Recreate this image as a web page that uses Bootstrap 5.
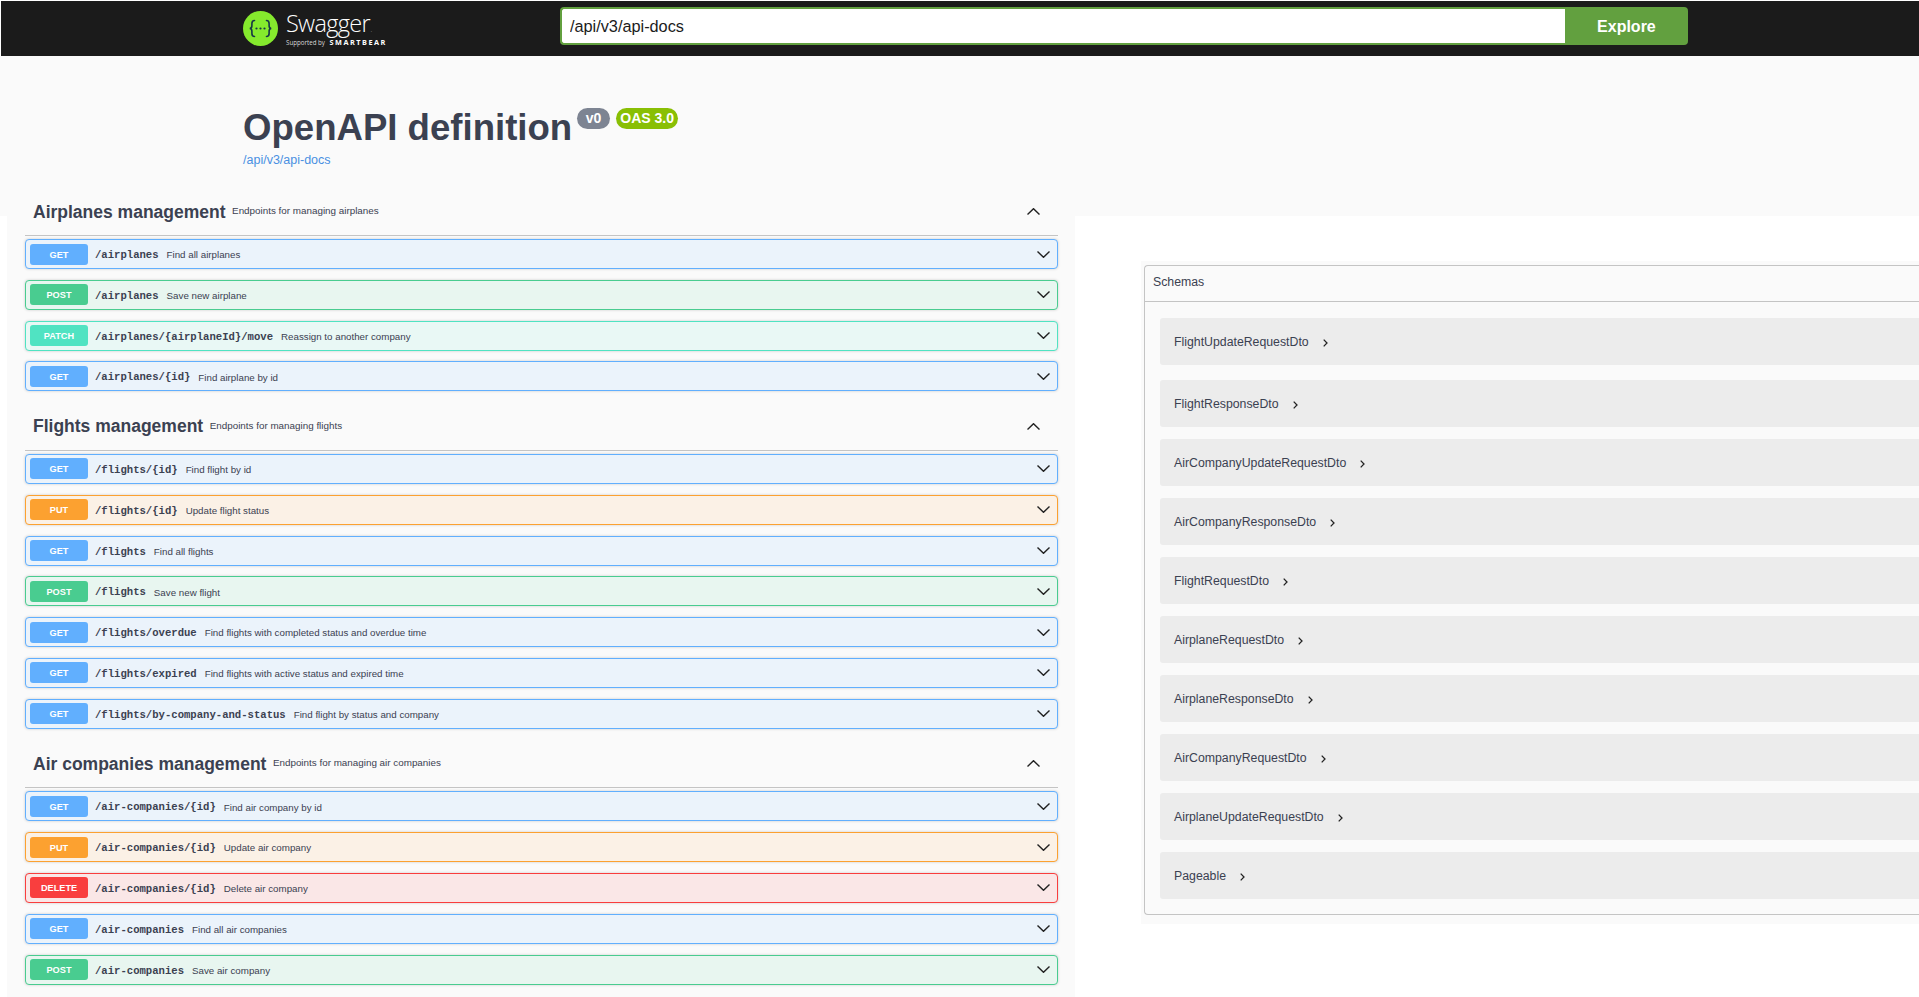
<!DOCTYPE html>
<html lang="en">
<head>
<meta charset="utf-8">
<title>Swagger UI</title>
<link href="https://cdn.jsdelivr.net/npm/bootstrap@5.3.0/dist/css/bootstrap.min.css" rel="stylesheet">
<style>
html,body{height:100%;overflow:hidden;background:#fff;font-family:"Liberation Sans",Arial,sans-serif;color:#3b4151}
.topbar{height:55px;margin:1px 0 0 1px;padding-left:242px;background:#1b1b1b}
.logo-mark{width:35px;height:35px;flex:none}
.logo-text{margin-left:8px;color:#fff;line-height:1;white-space:nowrap}
.logo-name{font-family:"Open Sans",sans-serif;font-weight:300;font-size:23.5px;letter-spacing:-.7px;line-height:26px}
.logo-tm{font-size:5px;letter-spacing:0;margin-left:1px}
.logo-sub{margin-top:-4.5px;font-family:"Open Sans",sans-serif;font-size:6.2px;line-height:9px;color:#d9d9d9}
.logo-sub b{font-size:7.3px;letter-spacing:1.5px;margin-left:3px;color:#fff}
.url-group{width:1128px;margin:6px 0 0 173px;height:38px;align-self:flex-start}
.url-input.form-control{height:38px;border:2px solid #62a03f;border-right:0;border-radius:4px 0 0 4px;padding:0 8px;font-size:16.3px;color:#1b1b1b;background:#fff;box-shadow:none}
.url-btn.btn{width:123px;height:38px;flex:none;background:#62a03f;border:0;border-radius:0 4px 4px 0;color:#fff;font-weight:700;font-size:16px;padding:1px 0 0}
.info-band{height:130px;background:#fafafa;padding:50px 0 0 243px}
.api-title{font-size:36.6px;font-weight:700;line-height:44px;color:#3b4151;margin:0}
.ver-tag.badge{height:21px;margin-top:2px;font-size:14px;font-weight:700;line-height:21px}
.ver-v.badge{margin-left:5px;padding:0 8.5px;background:#7d8492}
.ver-oas.badge{margin-left:6px;padding:0 4.5px;background:#89bf04}
.api-link{display:block;margin-top:3px;font-size:12.5px;line-height:15px;color:#4990e2;text-decoration:none}
.main-area{min-height:811px;background:linear-gradient(#fafafa 30px,#fff 30px)}
.ops-col{flex:none;width:1068px;margin-left:7px;padding:3px 17px 0 18px;background:#fafafa}
.tag-group + .tag-group{padding-top:1.8px}
.tag-head{height:47px;margin-bottom:3px;padding:0 18px 1px 8px;border-bottom:1px solid #c4c4c4}
.tag-name{font-size:17.5px;font-weight:700;line-height:22px;margin:0;color:#3b4151;white-space:nowrap}
.tag-desc{margin-left:6.500px;font-size:9.85px;color:#3b4151;white-space:nowrap}
.op-row{height:30px;margin-bottom:10.8px;padding:0 7px 0 4px;border:1px solid;border-radius:4px;box-shadow:0 0 3px rgba(0,0,0,.19)}
.op-get{background:#ebf3fb;border-color:#61affe}
.op-post{background:#e8f6f0;border-color:#49cc90}
.op-patch{background:#e9f8f5;border-color:#50e3c2}
.op-put{background:#fbf1e6;border-color:#fca130}
.op-del{background:#fae7e7;border-color:#f93e3e}
.verb{width:58px;height:21px;flex:none;border-radius:3px;color:#fff;font-size:9.2px;font-weight:700;line-height:22px;text-align:center}
.op-get .verb{background:#61affe}
.op-post .verb{background:#49cc90}
.op-patch .verb{background:#50e3c2}
.op-put .verb{background:#fca130}
.op-del .verb{background:#f93e3e}
.op-path{margin-left:7px;font-family:"Liberation Mono",monospace;font-size:10.6px;font-weight:700;color:#3b4151;white-space:nowrap;padding-top:4px}
.op-desc{margin-left:8px;font-size:9.75px;color:#3b4151;white-space:nowrap;padding-top:3px}
.chev{width:13px;height:7px;flex:none;fill:none;stroke:#222;stroke-width:1.4}
.schemas-col{flex:none;padding:75px 0 0 66px}
.schemas-wrap{width:800px;padding:4px 0 9px 3px;background:#fafafa}
.schemas-box{border:1px solid #c4c4c4;border-right:0;border-radius:4px 0 0 4px;padding-bottom:15px}
.schemas-title{height:36px;padding:0 0 2px 8px;border-bottom:1px solid #c4c4c4;font-size:12.3px;color:#3b4151;margin:0 0 16px}
.model-row{height:47px;margin:0 0 12px 15px;padding:2px 0 0 14px;border-radius:3px 0 0 3px;background:#ececec;font-size:12.3px;color:#3b4151}
.schemas-title + .model-row{margin-bottom:15px}
.model-row:last-child{margin-bottom:0}
.chev-r{width:5px;height:8px;margin-left:14px;flex:none;fill:none;stroke:#222;stroke-width:1.3}
</style>
</head>
<body>
<header class="topbar d-flex align-items-center">
  <svg class="logo-mark" viewBox="0 0 35 35" aria-hidden="true">
    <circle cx="17.5" cy="17.5" r="17.5" fill="#85ea2d"/>
    <g fill="none" stroke="#173647" stroke-width="1.6" stroke-linecap="round">
      <path d="M11.5 9.5c-2.2 0-2.6 1.2-2.6 3v2.3c0 1.5-.7 2.5-2.1 2.7 1.4.2 2.100 1.200 2.100 2.700v2.300c0 1.800.4 3 2.600 3"/>
      <path d="M23.500 9.500c2.200 0 2.600 1.200 2.600 3v2.300c0 1.500.7 2.500 2.100 2.700-1.400.2-2.100 1.200-2.100 2.700v2.300c0 1.800-.4 3-2.600 3"/>
    </g>
    <g fill="#173647"><circle cx="13.500" cy="17.500" r="1.100"/><circle cx="17.500" cy="17.500" r="1.100"/><circle cx="21.500" cy="17.500" r="1.100"/></g>
  </svg>
  <div class="logo-text">
    <div class="logo-name">Swagger<span class="logo-tm">.</span></div>
    <div class="logo-sub">Supported by <b>SMARTBEAR</b></div>
  </div>
  <form class="url-group input-group flex-nowrap">
    <input class="url-input form-control" type="text" value="/api/v3/api-docs" aria-label="Spec URL">
    <button class="url-btn btn" type="button">Explore</button>
  </form>
</header>

<section class="info-band">
  <div class="d-flex align-items-start">
    <h1 class="api-title">OpenAPI definition</h1>
    <span class="ver-tag ver-v badge rounded-pill">v0</span>
    <span class="ver-tag ver-oas badge rounded-pill">OAS 3.0</span>
  </div>
  <a class="api-link" href="#">/api/v3/api-docs</a>
</section>

<main class="main-area d-flex">
  <div class="ops-col">

    <div class="tag-group">
      <div class="tag-head d-flex align-items-center">
        <h3 class="tag-name">Airplanes management</h3><span class="tag-desc">Endpoints for managing airplanes</span>
        <svg class="chev ms-auto" viewBox="0 0 13 7"><path d="M.5 6.500 6.500.7l6 5.800"/></svg>
      </div>
      <div class="op-row op-get d-flex align-items-center"><span class="verb">GET</span><span class="op-path">/airplanes</span><span class="op-desc">Find all airplanes</span><svg class="chev ms-auto" viewBox="0 0 13 7"><path d="M.5.500l6 5.800 6-5.800"/></svg></div>
      <div class="op-row op-post d-flex align-items-center"><span class="verb">POST</span><span class="op-path">/airplanes</span><span class="op-desc">Save new airplane</span><svg class="chev ms-auto" viewBox="0 0 13 7"><path d="M.5.500l6 5.800 6-5.800"/></svg></div>
      <div class="op-row op-patch d-flex align-items-center"><span class="verb">PATCH</span><span class="op-path">/airplanes/{airplaneId}/move</span><span class="op-desc">Reassign to another company</span><svg class="chev ms-auto" viewBox="0 0 13 7"><path d="M.5.500l6 5.800 6-5.800"/></svg></div>
      <div class="op-row op-get d-flex align-items-center"><span class="verb">GET</span><span class="op-path">/airplanes/{id}</span><span class="op-desc">Find airplane by id</span><svg class="chev ms-auto" viewBox="0 0 13 7"><path d="M.5.500l6 5.800 6-5.800"/></svg></div>
    </div>

    <div class="tag-group">
      <div class="tag-head d-flex align-items-center">
        <h3 class="tag-name">Flights management</h3><span class="tag-desc">Endpoints for managing flights</span>
        <svg class="chev ms-auto" viewBox="0 0 13 7"><path d="M.5 6.500 6.500.7l6 5.800"/></svg>
      </div>
      <div class="op-row op-get d-flex align-items-center"><span class="verb">GET</span><span class="op-path">/flights/{id}</span><span class="op-desc">Find flight by id</span><svg class="chev ms-auto" viewBox="0 0 13 7"><path d="M.5.500l6 5.800 6-5.800"/></svg></div>
      <div class="op-row op-put d-flex align-items-center"><span class="verb">PUT</span><span class="op-path">/flights/{id}</span><span class="op-desc">Update flight status</span><svg class="chev ms-auto" viewBox="0 0 13 7"><path d="M.5.500l6 5.800 6-5.800"/></svg></div>
      <div class="op-row op-get d-flex align-items-center"><span class="verb">GET</span><span class="op-path">/flights</span><span class="op-desc">Find all flights</span><svg class="chev ms-auto" viewBox="0 0 13 7"><path d="M.5.500l6 5.800 6-5.800"/></svg></div>
      <div class="op-row op-post d-flex align-items-center"><span class="verb">POST</span><span class="op-path">/flights</span><span class="op-desc">Save new flight</span><svg class="chev ms-auto" viewBox="0 0 13 7"><path d="M.5.500l6 5.800 6-5.800"/></svg></div>
      <div class="op-row op-get d-flex align-items-center"><span class="verb">GET</span><span class="op-path">/flights/overdue</span><span class="op-desc">Find flights with completed status and overdue time</span><svg class="chev ms-auto" viewBox="0 0 13 7"><path d="M.5.500l6 5.800 6-5.800"/></svg></div>
      <div class="op-row op-get d-flex align-items-center"><span class="verb">GET</span><span class="op-path">/flights/expired</span><span class="op-desc">Find flights with active status and expired time</span><svg class="chev ms-auto" viewBox="0 0 13 7"><path d="M.5.500l6 5.800 6-5.800"/></svg></div>
      <div class="op-row op-get d-flex align-items-center"><span class="verb">GET</span><span class="op-path">/flights/by-company-and-status</span><span class="op-desc">Find flight by status and company</span><svg class="chev ms-auto" viewBox="0 0 13 7"><path d="M.5.500l6 5.800 6-5.800"/></svg></div>
    </div>

    <div class="tag-group">
      <div class="tag-head d-flex align-items-center">
        <h3 class="tag-name">Air companies management</h3><span class="tag-desc">Endpoints for managing air companies</span>
        <svg class="chev ms-auto" viewBox="0 0 13 7"><path d="M.5 6.500 6.500.7l6 5.800"/></svg>
      </div>
      <div class="op-row op-get d-flex align-items-center"><span class="verb">GET</span><span class="op-path">/air-companies/{id}</span><span class="op-desc">Find air company by id</span><svg class="chev ms-auto" viewBox="0 0 13 7"><path d="M.5.500l6 5.800 6-5.800"/></svg></div>
      <div class="op-row op-put d-flex align-items-center"><span class="verb">PUT</span><span class="op-path">/air-companies/{id}</span><span class="op-desc">Update air company</span><svg class="chev ms-auto" viewBox="0 0 13 7"><path d="M.5.500l6 5.800 6-5.800"/></svg></div>
      <div class="op-row op-del d-flex align-items-center"><span class="verb">DELETE</span><span class="op-path">/air-companies/{id}</span><span class="op-desc">Delete air company</span><svg class="chev ms-auto" viewBox="0 0 13 7"><path d="M.5.500l6 5.800 6-5.800"/></svg></div>
      <div class="op-row op-get d-flex align-items-center"><span class="verb">GET</span><span class="op-path">/air-companies</span><span class="op-desc">Find all air companies</span><svg class="chev ms-auto" viewBox="0 0 13 7"><path d="M.5.500l6 5.800 6-5.800"/></svg></div>
      <div class="op-row op-post d-flex align-items-center"><span class="verb">POST</span><span class="op-path">/air-companies</span><span class="op-desc">Save air company</span><svg class="chev ms-auto" viewBox="0 0 13 7"><path d="M.5.500l6 5.800 6-5.800"/></svg></div>
    </div>
  </div>

  <div class="schemas-col">
    <div class="schemas-wrap">
      <div class="schemas-box">
        <div class="schemas-title d-flex align-items-center">Schemas</div>
        <div class="model-row d-flex align-items-center">FlightUpdateRequestDto<svg class="chev-r" viewBox="0 0 5 8"><path d="M.7.600 4 4 .7 7.400"/></svg></div>
        <div class="model-row d-flex align-items-center">FlightResponseDto<svg class="chev-r" viewBox="0 0 5 8"><path d="M.7.600 4 4 .7 7.400"/></svg></div>
        <div class="model-row d-flex align-items-center">AirCompanyUpdateRequestDto<svg class="chev-r" viewBox="0 0 5 8"><path d="M.7.600 4 4 .7 7.400"/></svg></div>
        <div class="model-row d-flex align-items-center">AirCompanyResponseDto<svg class="chev-r" viewBox="0 0 5 8"><path d="M.7.600 4 4 .7 7.400"/></svg></div>
        <div class="model-row d-flex align-items-center">FlightRequestDto<svg class="chev-r" viewBox="0 0 5 8"><path d="M.7.600 4 4 .7 7.400"/></svg></div>
        <div class="model-row d-flex align-items-center">AirplaneRequestDto<svg class="chev-r" viewBox="0 0 5 8"><path d="M.7.600 4 4 .7 7.400"/></svg></div>
        <div class="model-row d-flex align-items-center">AirplaneResponseDto<svg class="chev-r" viewBox="0 0 5 8"><path d="M.7.600 4 4 .7 7.400"/></svg></div>
        <div class="model-row d-flex align-items-center">AirCompanyRequestDto<svg class="chev-r" viewBox="0 0 5 8"><path d="M.7.600 4 4 .7 7.400"/></svg></div>
        <div class="model-row d-flex align-items-center">AirplaneUpdateRequestDto<svg class="chev-r" viewBox="0 0 5 8"><path d="M.7.600 4 4 .7 7.400"/></svg></div>
        <div class="model-row d-flex align-items-center">Pageable<svg class="chev-r" viewBox="0 0 5 8"><path d="M.7.600 4 4 .7 7.400"/></svg></div>
      </div>
    </div>
  </div>
</main>
<script src="https://cdn.jsdelivr.net/npm/bootstrap@5.3.0/dist/js/bootstrap.bundle.min.js"></script>
</body>
</html>
